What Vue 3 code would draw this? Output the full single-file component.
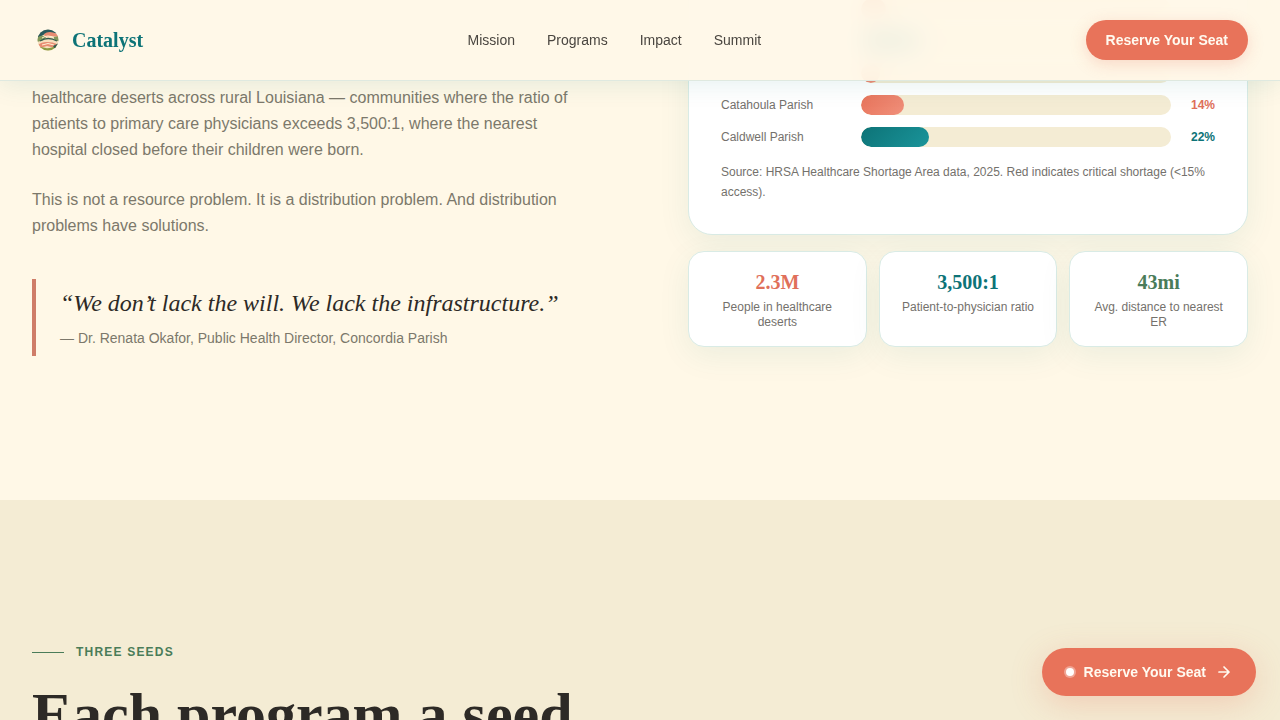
<script setup>
const links = ['Mission', 'Programs', 'Impact', 'Summit']
const parishes = [
  { id: 1, name: '', value: 8, tone: 'coral', shown: false },
  { id: 2, name: '', value: 19, tone: 'teal', shown: false },
  { id: 3, name: '', value: 6, tone: 'coral', shown: false },
  { id: 4, name: 'Catahoula Parish', value: 14, tone: 'coral', shown: true },
  { id: 5, name: 'Caldwell Parish', value: 22, tone: 'teal', shown: true }
]
const stats = [
  { value: '2.3M', label: 'People in healthcare deserts', tone: 'coral' },
  { value: '3,500:1', label: 'Patient-to-physician ratio', tone: 'teal' },
  { value: '43mi', label: 'Avg. distance to nearest ER', tone: 'green' }
]
</script>

<template>
  <div class="page">
    <header class="bar">
      <a class="brand" href="#">
        <svg class="logo" viewBox="0 0 32 32" aria-hidden="true">
          <defs><clipPath id="disc"><circle cx="16" cy="16" r="10.500" /></clipPath></defs>
          <g clip-path="url(#disc)" fill="none">
            <rect width="32" height="32" fill="#f6dfbd" />
            <path d="M5 5h22v5l-6-1-8 1-7 4z" fill="#285a5c" />
            <path d="M12 10q5-4 13 0l2 3-8-1-6 1z" fill="#e88c72" />
            <path d="M5 14q4-4 9-1l-2 3-7 2zM21 13l7-1v6l-5-2z" fill="#82985a" />
            <path d="M8 17q8-5 17 0" stroke="#345c4d" stroke-width="1.300" />
            <path d="M10 14q6-4 12 0" stroke="#fff1d4" stroke-width="1" />
            <path d="M6 21q3-3 9-3t10 2l-2 4-8-2-7 2z" fill="#e88c72" />
            <path d="M10 21q6-3 12 0" stroke="#fff1d4" stroke-width="1" />
            <path d="M5 23q6 0 9 1t12-3v7H5z" fill="#8c9b42" />
            <path d="M21 22l6-3v4l-4 2z" fill="#345c4d" />
          </g>
        </svg>
        <span>Catalyst</span>
      </a>
      <nav class="nav">
        <a v-for="l in links" :key="l" href="#">{{ l }}</a>
      </nav>
      <button class="cta" type="button">Reserve Your Seat</button>
    </header>

    <main>
      <section class="problem">
        <div class="story">
          <p>healthcare deserts across rural Louisiana — communities where the ratio of patients to primary care physicians exceeds 3,500:1, where the nearest hospital closed before their children were born.</p>
          <p>This is not a resource problem. It is a distribution problem. And distribution problems have solutions.</p>
          <blockquote>
            <p class="quote">“We don’t lack the will. We lack the infrastructure.”</p>
            <cite>— Dr. Renata Okafor, Public Health Director, Concordia Parish</cite>
          </blockquote>
        </div>
        <div class="data">
          <div class="card chart">
            <div class="rows">
              <div v-for="p in parishes" :key="p.id" class="row">
                <span class="name">{{ p.name }}</span>
                <div class="track"><div class="fill" :class="p.tone" :style="{ width: p.value + '%' }"></div></div>
                <span class="pct" :class="'text-' + p.tone"><template v-if="p.shown">{{ p.value }}%</template></span>
              </div>
            </div>
            <p class="source">Source: HRSA Healthcare Shortage Area data, 2025. Red indicates critical shortage (&lt;15% access).</p>
          </div>
          <div class="stats">
            <div v-for="s in stats" :key="s.value" class="card stat">
              <strong :class="'text-' + s.tone">{{ s.value }}</strong>
              <span>{{ s.label }}</span>
            </div>
          </div>
        </div>
      </section>

      <section class="programs">
        <div class="eyebrow">THREE SEEDS</div>
        <h2>Each program a seed</h2>
      </section>
    </main>

    <button class="float" type="button">
      <span class="dot"></span>
      <span>Reserve Your Seat</span>
      <svg viewBox="0 0 16 16" width="16" height="16" fill="none" stroke="currentColor" stroke-width="1.700" stroke-linecap="round" stroke-linejoin="round" aria-hidden="true"><path d="M3 8h10M8 3l5 5-5 5" /></svg>
    </button>
  </div>
</template>

<style>
body {
  margin: 0;
  background: #fff8e7;
}
</style>

<style scoped>
.page {
  height: 100vh;
  overflow: hidden;
  background: #fff8e7;
  color: #2d2a26;
  font-family: "Liberation Sans", Arial, sans-serif;
}
p, h2, blockquote {
  margin: 0;
}
a {
  color: inherit;
  text-decoration: none;
}
button {
  border: 0;
  border-radius: 999px;
  background: #e8735a;
  color: #fffaf0;
  font: bold 14px/20px "Liberation Sans", Arial, sans-serif;
  cursor: pointer;
}
.bar {
  position: fixed;
  z-index: 2;
  inset: 0 0 auto;
  box-sizing: border-box;
  height: 81px;
  padding: 0 32px;
  display: flex;
  align-items: center;
  justify-content: space-between;
  background: rgba(255, 248, 231, 0.93);
  backdrop-filter: blur(12px);
  border-bottom: 1px solid #dfe9e0;
  box-shadow: 0 4px 24px rgba(13, 115, 119, 0.1);
}
.brand {
  display: flex;
  align-items: center;
  gap: 8px;
  color: #0d7377;
  font: bold 20px/28px "Liberation Serif", "Times New Roman", serif;
}
.logo {
  width: 32px;
  height: 32px;
}
.nav {
  display: flex;
  gap: 32px;
  color: #4a4640;
  font-size: 14px;
}
.cta {
  padding: 10px 20px;
  box-shadow: 0 4px 16px rgba(232, 115, 90, 0.25);
}
main {
  margin-top: -34px;
}
.problem {
  display: grid;
  grid-template-columns: 1fr 1fr;
  gap: 96px;
  align-items: start;
  padding: 0 32px 144px;
}
.story {
  padding-top: 119px;
  color: #7c786b;
  font-size: 16px;
  line-height: 26px;
}
.story > p {
  margin-bottom: 24px;
}
blockquote {
  margin-top: 40px;
  padding: 8px 0 7px 24px;
  border-left: 4px solid #cf7d68;
}
.quote {
  margin-bottom: 8px;
  color: #2d2a26;
  font: italic 24px/32px "Liberation Serif", "Times New Roman", serif;
}
cite {
  display: block;
  font-style: normal;
  font-size: 14px;
  line-height: 22px;
}
.card {
  box-sizing: border-box;
  background: #fff;
  border: 1px solid #d9ebe5;
  box-shadow: 0 8px 32px rgba(13, 115, 119, 0.08);
}
.data {
  display: grid;
  gap: 16px;
}
.chart {
  padding: 32px;
  border-radius: 24px;
  color: #74716c;
  font-size: 12px;
}
.rows {
  display: grid;
  gap: 12px;
}
.row {
  display: flex;
  align-items: center;
  gap: 20px;
  line-height: 20px;
}
.name {
  flex: 0 0 120px;
}
.track {
  flex: 1;
  height: 20px;
  border-radius: 10px;
  background: #f4ecd4;
  overflow: hidden;
}
.fill {
  height: 100%;
  border-radius: 10px;
}
.coral {
  background: linear-gradient(135deg, #e8735a, #f0907b);
}
.teal {
  background: linear-gradient(135deg, #0d7377, #1a949a);
}
.pct {
  flex: 0 0 24px;
  text-align: right;
  font-weight: bold;
}
.text-coral {
  color: #e0705a;
}
.text-teal {
  color: #0d7377;
}
.text-green {
  color: #4a7c59;
}
.source {
  margin-top: 15px;
  line-height: 20px;
}
.stats {
  display: grid;
  grid-template-columns: repeat(3, 1fr);
  gap: 12px;
}
.stat {
  display: flex;
  flex-direction: column;
  gap: 4px;
  padding: 16px;
  border-radius: 16px;
  text-align: center;
}
.stat strong {
  font: bold 20px/28px "Liberation Serif", "Times New Roman", serif;
}
.stat span {
  color: #74716c;
  font-size: 12px;
  line-height: 15px;
}
.programs {
  padding: 144px 32px;
  background: #f4ecd4;
}
.eyebrow {
  display: flex;
  align-items: center;
  gap: 12px;
  color: #4a7c59;
  font-size: 12px;
  line-height: 16px;
  font-weight: bold;
  letter-spacing: 0.1em;
}
.eyebrow::before {
  content: "";
  width: 32px;
  height: 1px;
  background: #4a7c59;
}
h2 {
  margin-top: 20px;
  font: bold 60px/68px "Liberation Serif", "Times New Roman", serif;
}
.float {
  position: fixed;
  z-index: 3;
  right: 24px;
  bottom: 24px;
  display: flex;
  align-items: center;
  gap: 10px;
  height: 48px;
  padding: 0 24px;
  box-shadow: 0 8px 32px rgba(232, 115, 90, 0.25);
}
.dot {
  width: 8px;
  height: 8px;
  border-radius: 50%;
  background: #fff;
  box-shadow: 0 0 0 2px rgba(255, 255, 255, 0.35);
}
</style>
